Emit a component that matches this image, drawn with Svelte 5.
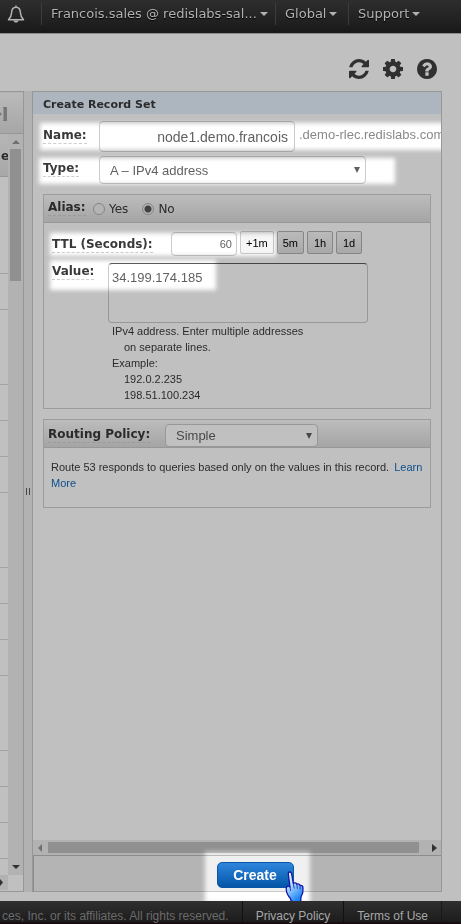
<script>
  const rowHeights = [97, 36, 75, 36, 36, 36, 75, 36, 36, 36, 75, 36, 36, 36];
  const presets = ['+1m', '5m', '1h', '1d'];
  let name = $state('node1.demo.francois');
  let type = $state('A – IPv4 address');
  let alias = $state('No');
  let ttl = $state('60');
  let value = $state('34.199.174.185');
  let policy = $state('Simple');
</script>

<div class="page">
  <nav class="topbar">
    <button class="bell" aria-label="Notifications">
      <svg width="18" height="20" viewBox="0 0 18 20">
        <path d="M9 1.5v2M9 3.2C5.8 3.2 4.7 5.600 4.600 8.500C4.500 12 3.600 13.500 1.500 15.700H16.500C14.400 13.500 13.500 12 13.400 8.500C13.300 5.600 12.200 3.200 9 3.200Z" fill="none" stroke="#b4b4b4" stroke-width="1.500" stroke-linejoin="round" />
        <path d="M6.500 16.500H11.500C11.200 19.200 6.800 19.200 6.500 16.500Z" fill="#b4b4b4" />
      </svg>
    </button>
    <button class="menu account">Francois.sales @ redislabs-sal...<i class="caret"></i></button>
    <button class="menu region">Global<i class="caret"></i></button>
    <button class="menu support">Support<i class="caret"></i></button>
  </nav>

  <header class="tools">
    <button aria-label="Refresh">
      <svg width="20" height="20" viewBox="0 0 1536 1536"><path fill="#303030" d="M1511 928q0 5-1 7-64 268-268 434.500T764 1536q-146 0-282.500-55T238 1324l-129 129q-19 19-45 19t-45-19-19-45V960q0-26 19-45t45-19h448q26 0 45 19t19 45-19 45l-137 137q71 66 161 102t187 36q134 0 250-65t186-179q11-17 53-117 8-23 30-23h192q13 0 22.500 9.500t9.500 22.500zm25-800v448q0 26-19 45t-45 19h-448q-26 0-45-19t-19-45 19-45l138-138Q969 256 768 256q-134 0-250 65T332 500q-11 17-53 117-8 23-30 23H50q-13 0-22.500-9.500T18 608v-7q65-268 270-434.500T768 0q146 0 284 55.500T1297 212l130-129q19-19 45-19t45 19 19 45z" /></svg>
    </button>
    <button aria-label="Settings">
      <svg width="20" height="20" viewBox="0 0 1536 1536"><path fill="#303030" d="M1024 768q0-106-75-181t-181-75-181 75-75 181 75 181 181 75 181-75 75-181zm512-109v222q0 12-8 23t-20 13l-185 28q-19 54-39 91 35 50 107 138 10 12 10 25t-9 23q-27 37-99 108t-94 71q-12 0-26-9l-138-108q-44 23-91 38-16 136-29 186-7 28-36 28H657q-14 0-24.500-8.500T621 1506l-28-184q-49-16-90-37l-141 107q-10 9-25 9-14 0-25-11-126-114-165-168-7-10-7-23 0-12 8-23 15-21 51-66.500t54-70.500q-27-50-41-99L29 913q-13-2-21-12.500T0 877V655q0-12 8-23t19-13l186-28q14-46 39-92-40-57-107-138-10-12-10-24 0-10 9-23 26-36 98.500-107.500T337 135q13 0 26 10l138 107q44-23 91-38 16-136 29-186 7-28 36-28h222q14 0 24.500 8.500T915 30l28 184q49 16 90 37l142-107q9-9 24-9 13 0 25 10 129 119 165 170 7 8 7 22 0 12-8 23-15 21-51 66.500t-54 70.500q26 50 41 98l183 28q13 2 21 12.500t8 23.500z" /></svg>
    </button>
    <button aria-label="Help">
      <svg width="20" height="20" viewBox="0 0 1536 1536"><path fill="#303030" d="M896 1248v-192q0-14-9-23t-23-9H672q-14 0-23 9t-9 23v192q0 14 9 23t23 9h192q14 0 23-9t9-23zm256-672q0-88-55.500-163T958 297t-170-41q-243 0-371 213-15 24 8 42l132 100q7 6 19 6 16 0 25-12 53-68 86-92 34-24 86-24 48 0 85.500 26t37.500 59q0 38-20 61t-68 45q-63 28-115.500 86.500T640 892v36q0 14 9 23t23 9h192q14 0 23-9t9-23q0-19 21.500-49.500T972 829q32-18 49-28.500t46-35 44.500-48 28-60.500 12.500-81zm384 192q0 209-103 385.500T1153.500 1433 768 1536t-385.500-103T103 1153.500 0 768t103-385.500T382.500 103 768 0t385.500 103T1433 382.500 1536 768z" /></svg>
    </button>
  </header>

  <main>
    <section class="records">
      <div class="records-tools">
        <svg width="8" height="14" viewBox="0 0 8 14"><path d="M0 5l2 2-2 2z" fill="#7d7d7d" /><rect x="3" y="0" width="4" height="14" fill="#777" /><path d="M3.500 1v12" stroke="#929292" /></svg>
      </div>
      <div class="records-body">
        <div class="column">
          <div class="col-head">e</div>
          {#each rowHeights as h}
            <div class="row" style="height:{h}px"></div>
          {/each}
        </div>
        <div class="vscroll">
          <svg width="8" height="4" viewBox="0 0 8 4"><path d="M4 0l4 4H0z" fill="#707070" /></svg>
          <div class="thumb"></div>
          <svg class="down" width="8" height="4" viewBox="0 0 8 4"><path d="M0 0h8L4 4z" fill="#303030" /></svg>
        </div>
      </div>
      <div class="corner"><svg width="8" height="15" viewBox="0 0 8 15"><path d="M0 4l3 3.500L0 11z" fill="#303030" /></svg></div>
    </section>

    <div class="splitter"><i></i></div>

    <section class="panel">
      <h2>Create Record Set</h2>
      <form class="fields" id="record" onsubmit={(e) => e.preventDefault()}>
        <div class="line name">
          <label for="name"><span>Name:</span></label>
          <input id="name" bind:value={name} />
          <span class="suffix">.demo-rlec.redislabs.com</span>
          <div class="glow"></div>
        </div>
        <div class="line type">
          <label for="type"><span>Type:</span></label>
          <div class="select">
            <select id="type" bind:value={type}><option>A – IPv4 address</option></select>
          </div>
          <div class="glow"></div>
        </div>

        <fieldset class="box">
          <div class="box-head alias">
            <b><span>Alias:</span></b>
            <label><input type="radio" name="alias" value="Yes" bind:group={alias} />Yes</label>
            <label><input type="radio" name="alias" value="No" bind:group={alias} />No</label>
          </div>
          <div class="line ttl">
            <label for="ttl"><span>TTL (Seconds):</span></label>
            <input id="ttl" bind:value={ttl} />
            {#each presets as p}
              <button type="button">{p}</button>
            {/each}
            <div class="glow"></div>
          </div>
          <div class="line value">
            <label for="value"><span>Value:</span></label>
            <textarea id="value" bind:value></textarea>
            <div class="glow"></div>
          </div>
          <div class="hint">
            <p>IPv4 address. Enter multiple addresses</p>
            <p class="in">on separate lines.</p>
            <p>Example:</p>
            <p class="in">192.0.2.235</p>
            <p class="in">198.51.100.234</p>
          </div>
        </fieldset>

        <fieldset class="box">
          <div class="box-head routing">
            <label for="policy"><span>Routing Policy:</span></label>
            <div class="select">
              <select id="policy" bind:value={policy}><option>Simple</option></select>
            </div>
          </div>
          <p class="about">Route 53 responds to queries based only on the values in this record. <a href="#learn">Learn More</a></p>
        </fieldset>
      </form>
      <div class="hscroll">
        <svg width="4" height="8" viewBox="0 0 4 8"><path d="M4 0v8L0 4z" fill="#707070" /></svg>
        <div class="thumb"></div>
        <svg width="5" height="8" viewBox="0 0 5 8"><path d="M0 0v8l5-4z" fill="#303030" /></svg>
      </div>
      <div class="actions">
        <div class="submit">
          <div class="glow"></div>
          <button form="record">Create</button>
          <svg class="hand" width="20" height="32" viewBox="0 0 20 32">
            <defs><linearGradient id="skin" x1="0" y1="0" x2="0.500" y2="1"><stop offset="0" stop-color="#fff" /><stop offset="0.450" stop-color="#b9dcff" /><stop offset="1" stop-color="#1f86f5" /></linearGradient></defs>
            <path d="M4.500 1C6 .8 6.500 2 6.700 3.500L8.300 12.500C9.500 11.500 11.300 11.800 11.800 13.300C13 12.500 14.800 13 15 14.500C16.700 14 18 15 18 17C18.300 21 17.600 23.500 16 26L15.700 30C13 31.300 8 31 6 29.700L5.500 27.500C3 25 1.500 22.500 1.200 18C1.200 15.500 3 14.300 5 16L3.300 3C3.200 1.800 3.600 1.100 4.500 1Z" fill="url(#skin)" stroke="#1414a8" stroke-width="1.300" stroke-linejoin="round" />
            <path d="M5 16l.6 4M8.300 12.500l.9 5M11.800 13.300l.6 4.500M15 14.500l.2 4" fill="none" stroke="#2340c4" />
          </svg>
        </div>
      </div>
    </section>
  </main>

  <footer>
    <span class="legal">ces, Inc. or its affiliates. All rights reserved.</span>
    <a href="#privacy">Privacy Policy</a>
    <a href="#terms">Terms of Use</a>
    <span class="end"></span>
  </footer>
</div>

<style>
  :global(body) { background: #c0c0c0; }
  .page, .page * { box-sizing: border-box; }
  .page {
    display: flex;
    flex-direction: column;
    min-height: 100vh;
    overflow: hidden;
    background: #c0c0c0;
    color: #2b2b2b;
    font: 11px/16px "Liberation Sans", Arial, sans-serif;
  }
  button, input, select, textarea { margin: 0; font-family: inherit; }
  p { margin: 0; }
  a { color: #0d4f8b; text-decoration: none; }

  .topbar {
    display: flex;
    align-items: flex-start;
    height: 34px;
    flex: none;
    background: linear-gradient(#2e2e2e, #191919);
    border-bottom: 1px solid #8c8c8c;
  }
  .topbar button { border: 0; background: none; padding: 0; }
  .topbar .bell { width: 41px; padding: 4px 0 0 7px; text-align: left; flex: none; }
  .bell svg { display: block; }
  .topbar .menu {
    display: flex;
    align-items: center;
    gap: 3px;
    height: 22px;
    margin-top: 3px;
    padding: 0 0 0 9px;
    border-left: 1px solid #3c3c3c;
    color: #b2b2b2;
    font: 13px/22px "DejaVu Sans", Verdana, sans-serif;
    white-space: nowrap;
    text-shadow: 0 1px 1px #000;
  }
  .account { width: 234px; }
  .region { width: 73px; }
  .caret { border: 4px solid transparent; border-top-color: #b2b2b2; border-bottom: 0; }

  .tools {
    display: flex;
    justify-content: flex-end;
    gap: 14px;
    height: 57px;
    flex: none;
    padding: 25px 24px 0 0;
  }
  .tools button { border: 0; padding: 0; background: none; width: 20px; height: 20px; }
  .tools svg { display: block; }

  main { flex: 1; display: flex; margin: 0 19px 9px 0; }
  .records {
    width: 24px;
    flex: none;
    display: flex;
    flex-direction: column;
    border: solid #979797;
    border-width: 1px 1px 1px 0;
  }
  .records-tools {
    height: 42px;
    padding-top: 14px;
    background: linear-gradient(#bababa, #a6a6a6);
    border-top: 1px solid #b4b4b4;
    border-bottom: 1px solid #979797;
  }
  .records-body { flex: 1; display: flex; }
  .column { width: 8px; overflow: hidden; }
  .col-head {
    height: 43px;
    padding: 14px 0 0 1px;
    border-bottom: 1px solid #979797;
    background: linear-gradient(#b6b6b6, #a8a8a8);
    font: bold 12px/16px "DejaVu Sans", Verdana, sans-serif;
  }
  .row { border-bottom: 1px solid #a3a3a3; }
  .vscroll {
    flex: 1;
    display: flex;
    flex-direction: column;
    align-items: center;
    padding: 6px 0;
    background: #b2b2b2;
  }
  .vscroll .thumb { width: 11px; height: 132px; margin-top: 5px; background: #909090; }
  .down { margin-top: auto; }
  .corner { height: 16px; }
  .corner svg { display: block; background: #b2b2b2; }

  .splitter { width: 8px; flex: none; display: flex; justify-content: center; background: #b2b2b2; }
  .splitter i { width: 4px; height: 7px; margin-top: 397px; border: solid #444; border-width: 0 1px; }

  .panel {
    flex: 1;
    min-width: 0;
    display: flex;
    flex-direction: column;
    border: 1px solid #979797;
  }
  h2 {
    margin: 0;
    height: 22px;
    padding: 4px 10px 0;
    background: #adb5bf;
    font: bold 11px/18px "DejaVu Sans", Verdana, sans-serif;
  }
  .fields { flex: 1; padding: 7px 0 0 10px; overflow: hidden; }
  .line { position: relative; display: flex; }
  .line > label, b, .routing > label {
    flex: none;
    font: bold 12px/15px "DejaVu Sans", Verdana, sans-serif;
  }
  .line > label span, b span, .routing label span { display: inline-block; border-bottom: 1px dashed #9a9a9a; }
  .glow {
    position: absolute;
    background: #404040;
    mix-blend-mode: color-dodge;
    filter: blur(2px);
    pointer-events: none;
  }
  .fields input:not([type='radio']), select, textarea {
    border: 1px solid #989898;
    border-radius: 4px;
    background: #c0c0c0;
    color: #484848;
    outline: 0;
  }
  .name { height: 35px; }
  .name > label { width: 56px; padding-top: 7px; }
  .name input { width: 196px; height: 31px; flex: none; padding: 0 6px; font-size: 14px; text-align: right; }
  .suffix { padding: 6px 0 0 4px; font-size: 13px; color: #666; white-space: nowrap; }
  .name .glow { inset: 2px -10px 6px -3px; }
  .type { height: 38px; }
  .type > label { width: 56px; padding-top: 5px; }
  .select { position: relative; }
  .select::after {
    content: '';
    position: absolute;
    right: 6px;
    top: 50%;
    margin-top: -3px;
    border: 3px solid transparent;
    border-top: 6px solid #484848;
    border-bottom: 0;
  }
  select { display: block; width: 100%; height: 100%; padding: 0 10px; appearance: none; font-size: 13px; }
  .type .select { width: 267px; height: 28px; }
  .type .glow { left: -4px; width: 356px; top: 2px; height: 26px; }

  .box { margin: 0 10px 10px 0; padding: 0; border: 1px solid #9c9c9c; min-width: 0; }
  .box-head {
    display: flex;
    height: 28px;
    padding: 4px;
    background: linear-gradient(#bcbcbc, #a5a5a5);
    border-bottom: 1px solid #979797;
  }
  .alias b { width: 45px; padding-top: 1px; }
  .alias label { display: flex; align-items: center; height: 19px; gap: 4px; margin-right: 14px; font: 12px/18px "DejaVu Sans", Verdana, sans-serif; }
  .alias input {
    appearance: none;
    width: 12px;
    height: 12px;
    border: 1px solid #858585;
    border-radius: 50%;
    background: #b4b4b4;
  }
  .alias input:checked { background: radial-gradient(#404040 3px, #b4b4b4 4px); }

  .ttl { padding: 8px 0 0 8px; height: 40px; gap: 3px; }
  .ttl > label { width: 116px; padding-top: 6px; }
  .ttl input { width: 66px; height: 24px; margin-top: 1px; padding: 0 4px; font-size: 11px; text-align: right; }
  .ttl button {
    height: 23px;
    min-width: 26px;
    padding: 0 5px;
    border: 1px solid #858585;
    border-radius: 2px;
    background: linear-gradient(#bababa, #a9a9a9);
    color: #000;
    font-size: 11px;
    line-height: 20px;
  }
  .ttl button:nth-of-type(1) { background: #b8b8b8; border-color: #999; }
  .ttl .glow { left: 6px; width: 226px; top: 10px; height: 23px; }
  .value { padding-left: 8px; height: 60px; }
  .value > label { width: 56px; padding-top: 1px; }
  textarea { display: block; width: 260px; height: 60px; padding: 5px 3px; border-top-color: #444; resize: none; font-size: 13px; line-height: 17px; }
  .value .glow { left: 6px; width: 166px; top: -3px; height: 30px; }
  .hint { padding: 0 0 5px 68px; }
  .in { padding-left: 12px; }

  .routing { padding: 4px; }
  .routing label { width: 117px; padding-top: 3px; }
  .routing .select { width: 153px; height: 23px; }
  .about { padding: 11px 2px 16px 7px; min-height: 59px; }
  .about a { margin-left: 2px; }

  .hscroll { display: flex; align-items: center; height: 15px; flex: none; padding: 0 4px 0 5px; background: #b2b2b2; }
  .hscroll .thumb { flex: 1; height: 11px; margin: 0 13px 0 6px; background: #909090; }
  .actions {
    display: flex;
    justify-content: center;
    height: 36px;
    flex: none;
    padding: 6px 0 0 35px;
    background: #b4b4b4;
    border-top: 1px solid #8c8c8c;
    border-left: 1px solid #8c8c8c;
  }
  .submit { position: relative; }
  .submit .glow { inset: -11px -16px -12px -12px; }
  .submit button {
    position: relative;
    width: 77px;
    height: 26px;
    border: 1px solid #0a56a5;
    border-radius: 5px;
    background: linear-gradient(#2e86dc, #0455a8);
    color: #fff;
    font: bold 14px/20px "Liberation Sans", Arial, sans-serif;
  }
  .hand { position: absolute; left: 68px; top: 9px; }

  footer {
    position: relative;
    display: flex;
    justify-content: flex-end;
    height: 23px;
    flex: none;
    padding-right: 19px;
    background: linear-gradient(#2f2f2f, #1c1c1c);
    border-bottom: 2px solid #180c10;
    color: #6b6b6b;
    font-size: 12px;
    line-height: 30px;
    white-space: nowrap;
  }
  .legal { padding-right: 13px; }
  footer a { padding: 0 13px; border-left: 1px solid #111; color: #a8a8a8; }
  .end { border-left: 1px solid #181818; }
</style>
